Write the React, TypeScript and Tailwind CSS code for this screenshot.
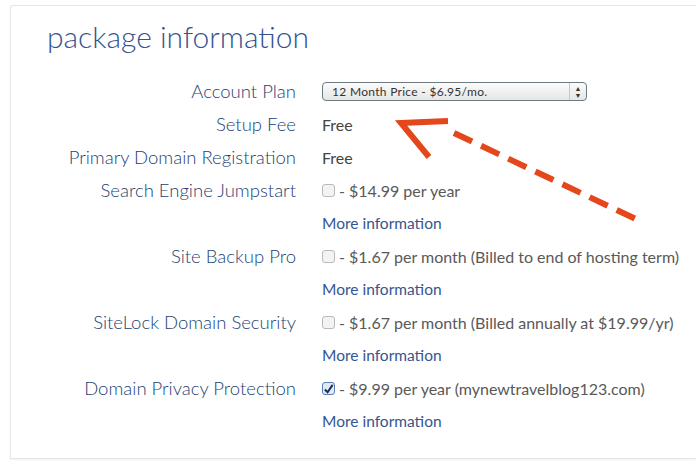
import * as React from "react";

const rows: { label: string; kind: "select" | "text" | "check"; value?: string; checked?: boolean }[] = [
  { label: "Account Plan", kind: "select" },
  { label: "Setup Fee", kind: "text", value: "Free" },
  { label: "Primary Domain Registration", kind: "text", value: "Free" },
  { label: "Search Engine Jumpstart", kind: "check", value: "- $14.99 per year" },
  { label: "Site Backup Pro", kind: "check", value: "- $1.67 per month (Billed to end of hosting term)" },
  { label: "SiteLock Domain Security", kind: "check", value: "- $1.67 per month (Billed annually at $19.99/yr)" },
  {
    label: "Domain Privacy Protection",
    kind: "check",
    value: "- $9.99 per year (mynewtravelblog123.com)",
    checked: true,
  },
];

function Checkbox({ checked }: { checked?: boolean }) {
  return (
    <span
      className={`mr-[4px] inline-flex size-[13px] shrink-0 items-center justify-center rounded-[3px] border ${
        checked ? "border-[#5a7fb5] bg-[#dfe9f7]" : "border-[#b9b9b9] bg-[#f3f3f3]"
      }`}
    >
      {checked && (
        <svg viewBox="0 0 12 12" className="size-[12px]">
          <path d="M2 6.5 L5 9.5 L10.5 1.5" fill="none" stroke="#1c2f55" strokeWidth="2.2" />
        </svg>
      )}
    </span>
  );
}

function PlanSelect() {
  return (
    <div className="flex h-[19px] w-[265px] items-center rounded-[4px] border border-[#6f7a80] bg-gradient-to-b from-[#fbfbfb] to-[#e6e6e6] text-[12px] tracking-[0.3px] text-[#333]">
      <span className="flex-1 pl-[9px] leading-none">12 Month Price - $6.95/mo.</span>
      <span className="flex h-full w-[17px] flex-col items-center justify-center border-l border-[#c8c8c8] text-[7px] leading-[7px] text-[#333]">
        <span>▲</span>
        <span>▼</span>
      </span>
    </div>
  );
}

export default function App() {
  return (
    <div className="relative h-[464px] w-[696px] overflow-hidden bg-white font-['Lato',sans-serif]">
      <div className="ml-[10px] mt-[5px] h-[454px] rounded-tl-[3px] border border-r-0 border-[#e6e6e6] shadow-[0_1px_2px_rgba(0,0,0,0.06)]">
        <h1 className="ml-[36px] mt-[12px] text-[30px] font-light leading-[36px] text-[#33548f]">package information</h1>
        <div className="mt-[21px] flex flex-col">
          {rows.map((row) => (
            <React.Fragment key={row.label}>
              <div className="flex h-[33px] items-center">
                <div className="w-[285px] text-right text-[18.5px] font-light text-[#233f73]">{row.label}</div>
                <div className="ml-[26px] flex items-center text-[16px] text-[#595959]">
                  {row.kind === "select" && <PlanSelect />}
                  {row.kind === "text" && <span className="text-[#444]">{row.value}</span>}
                  {row.kind === "check" && (
                    <>
                      <Checkbox checked={row.checked} />
                      <span>{row.value}</span>
                    </>
                  )}
                </div>
              </div>
              {row.kind === "check" && (
                <div className="flex h-[33px] items-center pl-[311px] text-[15.5px] text-[#34558f]">More information</div>
              )}
            </React.Fragment>
          ))}
        </div>
      </div>
      <svg className="pointer-events-none absolute left-0 top-0" width="696" height="464" viewBox="0 0 696 464">
        <g stroke="#e5471c" strokeWidth="6" fill="none">
          <path d="M448 121 L401 123 L429 157" strokeLinejoin="miter" />
          <path d="M454 133 L640 221" strokeDasharray="20 10" />
        </g>
      </svg>
    </div>
  );
}
